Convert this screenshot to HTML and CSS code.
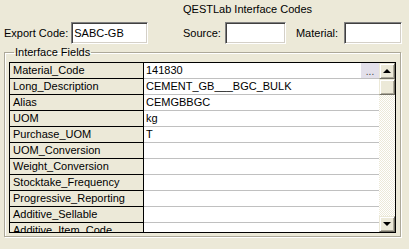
FILE: index.html
```html
<!DOCTYPE html>
<html lang="en">
<head>
  <meta charset="UTF-8" />
  <title>QESTLab Interface Codes</title>
  <link rel="stylesheet" href="styles.css">
</head>
<body>

  <div class="top">
    <div class="export">
      <label>Export Code:</label>
      <input class="field export-input" type="text" value="SABC-GB" />
    </div>
    <div class="codes">
      <div class="title">QESTLab Interface Codes</div>
      <div class="code-fields">
        <label>Source:</label>
        <input class="field source-input" type="text" value="" />
        <label class="material-label">Material:</label>
        <input class="field material-input" type="text" value="" />
      </div>
    </div>
  </div>

  <fieldset class="group">
    <legend>Interface Fields</legend>
    <div class="grid">
      <div class="rows">
        <div class="row">
          <div class="name">Material_Code</div>
          <div class="value">141830<span class="dots">...</span></div>
        </div>
        <div class="row">
          <div class="name">Long_Description</div>
          <div class="value">CEMENT_GB___BGC_BULK</div>
        </div>
        <div class="row">
          <div class="name">Alias</div>
          <div class="value">CEMGBBGC</div>
        </div>
        <div class="row">
          <div class="name">UOM</div>
          <div class="value">kg</div>
        </div>
        <div class="row">
          <div class="name">Purchase_UOM</div>
          <div class="value">T</div>
        </div>
        <div class="row">
          <div class="name">UOM_Conversion</div>
          <div class="value"></div>
        </div>
        <div class="row">
          <div class="name">Weight_Conversion</div>
          <div class="value"></div>
        </div>
        <div class="row">
          <div class="name">Stocktake_Frequency</div>
          <div class="value"></div>
        </div>
        <div class="row">
          <div class="name">Progressive_Reporting</div>
          <div class="value"></div>
        </div>
        <div class="row">
          <div class="name">Additive_Sellable</div>
          <div class="value"></div>
        </div>
        <div class="row">
          <div class="name">Additive_Item_Code</div>
          <div class="value"></div>
        </div>
      </div>
      <div class="scrollbar">
        <div class="sb-btn"><span class="arrow-up"></span></div>
        <div class="sb-thumb"></div>
        <div class="sb-track"></div>
        <div class="sb-btn"><span class="arrow-down"></span></div>
      </div>
    </div>
  </fieldset>

</body>
</html>
```

FILE: styles.css
```css
* {
  box-sizing: border-box;
  margin: 0;
  padding: 0;
}

body {
  background-color: #ece9d8;
  color: #000;
  font-family: 'Liberation Sans', Arial, sans-serif;
  font-size: 11px;
  width: 409px;
  height: 249px;
  overflow: hidden;
}

.top {
  display: flex;
  align-items: flex-end;
  padding: 3px 0 0 4px;
  height: 44px;
}

.export {
  display: flex;
  align-items: center;
  gap: 3px;
  width: 179px;
  height: 22px;
}

.codes {
  display: flex;
  flex-direction: column;
}

.title {
  height: 19px;
  line-height: 13px;
}

.code-fields {
  display: flex;
  align-items: center;
  height: 22px;
}

.code-fields label {
  margin-right: 4px;
}

.code-fields .material-label {
  margin-left: 10px;
  margin-right: 6px;
}

.field {
  height: 22px;
  padding: 0 2px;
  font-family: 'Liberation Sans', Arial, sans-serif;
  font-size: 11px;
  color: #000;
  background: #fff;
  border: 1px solid;
  border-color: #808080 #fff #fff #808080;
  box-shadow: inset 1px 1px 0 #404040, inset -1px -1px 0 #d4d0c8;
  outline: none;
}

.export-input {
  width: 77px;
}

.source-input {
  width: 61px;
}

.material-input {
  width: 58px;
}

.group {
  margin: 2px 8px 0 4px;
  padding: 3px 4px 3px 4px;
  border: 1px solid #aca899;
  box-shadow: 1px 1px 0 #fff, inset 1px 1px 0 #fff;
  min-width: 0;
}

.group legend {
  margin-left: 5px;
  padding: 0 1px;
  line-height: 13px;
}

.grid {
  display: flex;
  height: 171px;
  border: 1px solid #000;
  overflow: hidden;
}

.rows {
  flex: 1;
  overflow: hidden;
}

.row {
  display: flex;
  height: 16px;
}

.name {
  width: 134px;
  padding-left: 3px;
  line-height: 15px;
  border-right: 1px solid #000;
  border-bottom: 1px solid #000;
  white-space: nowrap;
}

.value {
  position: relative;
  flex: 1;
  padding-left: 2px;
  line-height: 15px;
  background: #fff;
  border-bottom: 1px solid #c0c0c0;
  white-space: nowrap;
}

.dots {
  position: absolute;
  top: 0;
  right: 0;
  width: 18px;
  height: 15px;
  background: #e3e0ea;
  color: #444;
  text-align: center;
  line-height: 17px;
  font-size: 10px;
}

.scrollbar {
  width: 16px;
  display: flex;
  flex-direction: column;
}

.sb-btn,
.sb-thumb {
  height: 16px;
  background: #ece9d8;
  border: 1px solid;
  border-color: #ece9d8 #716f64 #716f64 #ece9d8;
  box-shadow: inset 1px 1px 0 #fff, inset -1px -1px 0 #aca899;
  display: flex;
  align-items: center;
  justify-content: center;
}

.sb-track {
  flex: 1;
  background: repeating-conic-gradient(#fff 0 25%, #ece9d8 0 50%) 0 0 / 2px 2px;
}

.arrow-up,
.arrow-down {
  width: 0;
  height: 0;
  border-left: 4px solid transparent;
  border-right: 4px solid transparent;
}

.arrow-up {
  border-bottom: 4px solid #000;
}

.arrow-down {
  border-top: 4px solid #000;
}
```
